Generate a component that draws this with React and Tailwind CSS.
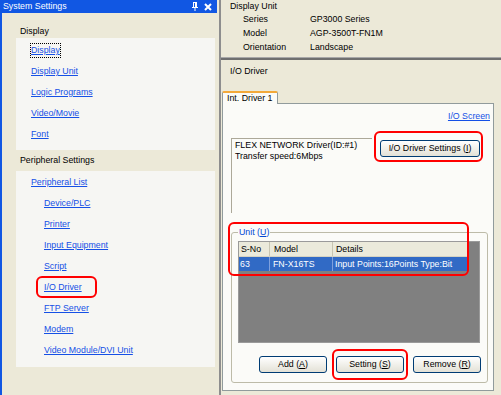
import React from "react";

// Ссылки левой панели
const leftTop = ["Display", "Display Unit", "Logic Programs", "Video/Movie", "Font"];
const leftPeripheral = [
  { label: "Peripheral List", level: 1 },
  { label: "Device/PLC", level: 2 },
  { label: "Printer", level: 2 },
  { label: "Input Equipment", level: 2 },
  { label: "Script", level: 2 },
  { label: "I/O Driver", level: 2, marked: true },
  { label: "FTP Server", level: 2 },
  { label: "Modem", level: 2 },
  { label: "Video Module/DVI Unit", level: 2 },
];

const RedMark = ({ className }) => (
  <div className={`pointer-events-none absolute rounded-[6px] border-2 border-[#ff0000] ${className}`} />
);

const XpButton = ({ children, className = "" }) => (
  <div
    className={`flex h-[17px] items-center justify-center rounded-[3px] border border-[#003c74] bg-gradient-to-b from-white to-[#e3e1d6] text-black ${className}`}
  >
    {children}
  </div>
);

const Key = ({ children }) => <span className="underline">{children}</span>;

function LeftPanel() {
  return (
    <div className="flex w-[219px] shrink-0 flex-col">
      <div className="flex h-[13px] w-[217px] items-center justify-between bg-[#1157e3] pl-[3px] pr-[5px] text-white">
        <span className="leading-[13px]">System Settings</span>
        <div className="flex items-center gap-[6px]">
          <svg width="6" height="9" viewBox="0 0 6 9">
            <rect x="1" y="0" width="4" height="1" fill="white" />
            <rect x="1" y="1" width="1" height="4" fill="white" />
            <rect x="3" y="1" width="2" height="4" fill="white" />
            <rect x="0" y="5" width="6" height="1" fill="white" />
            <rect x="2.5" y="6" width="1" height="3" fill="white" />
          </svg>
          <svg width="8" height="8" viewBox="0 0 8 8">
            <path d="M1 1 L7 7 M7 1 L1 7" stroke="white" strokeWidth="2" />
          </svg>
        </div>
      </div>
      <div className="flex-1 border-l-[2px] border-[#1157e3] pl-[14px] pr-[4px] pt-[11px]">
        <div className="h-[14px] pl-[4px] leading-[14px] text-black">Display</div>
        <div className="bg-[#f6f6f3] pb-[5px] pt-[2px]">
          {leftTop.map((t, i) => (
            <div key={t} className="flex h-[21px] items-center pl-[15px]">
              <span
                className={`text-[#1550e6] underline ${
                  i === 0 ? "outline outline-1 outline-dotted outline-black" : ""
                }`}
              >
                {t}
              </span>
            </div>
          ))}
        </div>
        <div className="h-[21px] pl-[4px] leading-[21px] text-black">Peripheral Settings</div>
        <div className="bg-[#f6f6f3] pb-[6px] pt-[1px]">
          {leftPeripheral.map((item) => (
            <div
              key={item.label}
              className={`relative flex h-[21px] items-center ${item.level === 1 ? "pl-[15px]" : "pl-[28px]"}`}
            >
              <span className="text-[#1550e6] underline">{item.label}</span>
              {item.marked && <RedMark className="left-[20px] top-[-1px] h-[22px] w-[61px]" />}
            </div>
          ))}
        </div>
      </div>
    </div>
  );
}

function UnitList() {
  return (
    <div className="h-[102px] w-[242px] border border-[#9a9a9a] bg-[#808080]">
      <div className="flex h-[15px] w-[228px] border-b border-[#d6d3c2] bg-[#ebeadb] text-black">
        <div className="w-[31px] border-r border-[#c7c5b2] pl-[2px] leading-[14px]">S-No</div>
        <div className="w-[63px] border-r border-[#c7c5b2] pl-[4px] leading-[14px]">Model</div>
        <div className="flex-1 pl-[3px] leading-[14px]">Details</div>
      </div>
      <div className="flex h-[14px] w-[228px] bg-[#316ac5] text-white">
        <div className="w-[31px] border-r border-[#7ea0dd] pl-[1px] leading-[14px]">63</div>
        <div className="w-[63px] border-r border-[#7ea0dd] pl-[3px] leading-[14px]">FN-X16TS</div>
        <div className="flex-1 pl-[2px] leading-[14px]">Input Points:16Points Type:Bit</div>
      </div>
    </div>
  );
}

function RightPanel() {
  return (
    <div className="flex flex-1 flex-col border-l-2 border-[#8e8e8e]">
      <div className="h-[57px] pl-[9px] text-black">
        <div className="h-[13px] leading-[13px]">Display Unit</div>
        {[
          ["Series", "GP3000 Series"],
          ["Model", "AGP-3500T-FN1M"],
          ["Orientation", "Landscape"],
        ].map(([k, v]) => (
          <div key={k} className="flex h-[14px] items-center pl-[13px]">
            <span className="w-[67px]">{k}</span>
            <span>{v}</span>
          </div>
        ))}
      </div>
      <div className="h-[3px] border-t border-[#a8a8a8] bg-[#6f6f6f]" />
      <div className="flex flex-1 flex-col pl-[1px]">
        <div className="ml-[8px] mt-[4px] h-[14px] leading-[14px] text-black">I/O Driver</div>
        <div className="mt-[13px] flex">
          <div className="relative z-10 -mb-[1px] h-[13px] w-[56px] rounded-t-[2px] border-x border-t-2 border-x-[#919b9c] border-t-[#f3a93a] bg-[#fbfbf8] pl-[4px] leading-[11px] text-black">
            Int. Driver 1
          </div>
        </div>
        <div className="flex h-[288px] w-[272px] flex-col border border-[#919b9c] bg-[#fbfbf8]">
          <div className="mt-[6px] flex h-[12px] justify-end pr-[3px]">
            <span className="text-[#1550e6] underline">I/O Screen</span>
          </div>
          <div className="mt-[16px] flex pl-[8px]">
            <div className="h-[75px] w-[141px] border-l border-t border-[#aca899] pl-[3px] pt-[1px] leading-[11px] text-black">
              <div>FLEX NETWORK Driver(ID:#1)</div>
              <div>Transfer speed:6Mbps</div>
            </div>
            <div className="relative ml-[8px] mt-[2px]">
              <XpButton className="w-[100px]">
                I/O Driver Settings (<Key>I</Key>)
              </XpButton>
              <RedMark className="left-[-6px] top-[-9px] h-[31px] w-[109px]" />
            </div>
          </div>
          <div className="relative ml-[8px] mt-[19px] h-[151px] w-[257px] rounded-[3px] border border-[#bdbba8] px-[6px]">
            <div className="-mt-[6px] w-fit bg-[#fbfbf8] px-[1px] leading-[11px] text-[#0046d5]">
              Unit (<Key>U</Key>)
            </div>
            <div className="mt-[3px]">
              <UnitList />
            </div>
            <div className="mt-[13px] flex justify-end gap-[9px]">
              <XpButton className="w-[68px]">
                Add (<Key>A</Key>)
              </XpButton>
              <div className="relative">
                <XpButton className="w-[68px]">
                  Setting (<Key>S</Key>)
                </XpButton>
                <RedMark className="left-[-4px] top-[-7px] h-[31px] w-[76px]" />
              </div>
              <XpButton className="w-[68px]">
                Remove (<Key>R</Key>)
              </XpButton>
            </div>
            <RedMark className="left-[-4px] top-[-11px] h-[54px] w-[241px]" />
          </div>
        </div>
      </div>
    </div>
  );
}

export default function App() {
  return (
    <div
      className="flex h-[395px] w-[501px] overflow-hidden bg-[#ece9d8] text-[8.8px]"
      style={{ fontFamily: '"Liberation Sans", Arial, sans-serif' }}
    >
      <LeftPanel />
      <RightPanel />
    </div>
  );
}
